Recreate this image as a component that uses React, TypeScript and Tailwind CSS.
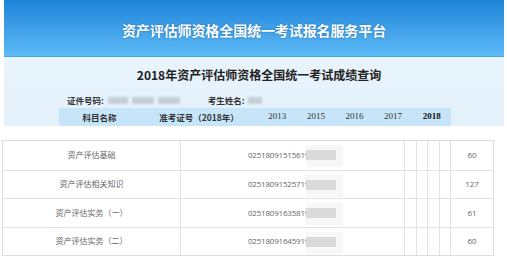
import React from "react";

const cjk = "font-['Noto_Sans_CJK_SC','Noto_Sans',sans-serif]";

const rows = [
  { name: "资产评估基础", no: "025180915156", score: "60" },
  { name: "资产评估相关知识", no: "025180915257", score: "127" },
  { name: "资产评估实务（一）", no: "025180916358", score: "61" },
  { name: "资产评估实务（二）", no: "025180916459", score: "60" }
];

const years = ["2013", "2015", "2016", "2017", "2018"];

function Blurred({ w }: { w: string }) {
  return <span className={`inline-block h-[7px] ${w} bg-[#c4cfd7] blur-[1px]`} />;
}

export default function App() {
  return (
    <div className={`h-[278px] w-[507px] overflow-hidden bg-white ${cjk}`}>
      <div className="mx-[4px] w-[500px]">
        <div className="flex h-[57px] items-center justify-center border-b border-[#49a6e6] bg-gradient-to-b from-[#1c84d9] to-[#5dbbf7]">
          <span className="mt-[4px] text-[14px] font-bold tracking-[-0.1px] text-white [text-shadow:0_0_2px_rgba(0,60,120,0.5)]">
            资产评估师资格全国统一考试报名服务平台
          </span>
        </div>

        <div className="flex h-[69px] flex-col bg-gradient-to-b from-[#e9f4fc] to-[#e3f1fb]">
          <div className="flex h-[35px] items-center justify-center pl-[10px] text-[12px] font-bold text-[#222]">
            2018年资产评估师资格全国统一考试成绩查询
          </div>
          <div className="flex h-[16px] items-center pl-[63px] text-[8.5px] font-bold text-[#333]">
            <span>证件号码:</span>
            <span className="ml-[4px] flex items-center gap-[4px]">
              <Blurred w="w-[20px]" />
              <Blurred w="w-[22px]" />
              <Blurred w="w-[22px]" />
            </span>
            <span className="ml-[28px]">考生姓名:</span>
            <span className="ml-[3px]">
              <Blurred w="w-[14px]" />
            </span>
          </div>
          <div className="ml-[55px] flex h-[18px] w-[392px] items-center bg-[#c6e5f8] text-[8.5px] font-bold text-[#333]">
            <div className="w-[81px] text-center">科目名称</div>
            <div className="w-[118px] text-center">准考证号（2018年）</div>
            {years.map((y) => (
              <div
                key={y}
                className={`w-[38.6px] text-center font-['Liberation_Serif',serif] text-[9px] ${y === "2018" ? "font-bold text-[#111]" : "font-normal"}`}
              >
                {y}
              </div>
            ))}
          </div>
        </div>
      </div>

      <div className="ml-[2px] mt-[14px] w-[492px] border border-[#dcdcdc] text-[8px] text-[#666]">
        {rows.map((r, i) => (
          <div
            key={r.name}
            className={`grid h-[28.5px] grid-cols-[178px_224px_12px_11px_12px_11px_1fr] ${i > 0 ? "border-t border-[#e2e2e2]" : ""}`}
          >
            <div className="flex items-center justify-center border-r border-[#e2e2e2]">{r.name}</div>
            <div className="relative flex items-center border-r border-[#e2e2e2] pl-[67px]">
              <span className="font-['Open_Sans','Noto_Sans',sans-serif] tracking-[-0.2px]">
                {r.no}19
              </span>
              <span className="absolute left-[125px] top-[4px] h-[22px] w-[37px] bg-[#f7f7f7]" />
              <span className="absolute left-[125px] top-[9px] h-[10px] w-[30px] bg-[#dadada]" />
            </div>
            <div className="border-r border-[#e2e2e2]" />
            <div className="border-r border-[#e2e2e2]" />
            <div className="border-r border-[#e2e2e2]" />
            <div className="border-r border-[#e2e2e2]" />
            <div className="flex items-center justify-center font-['Open_Sans','Noto_Sans',sans-serif]">{r.score}</div>
          </div>
        ))}
      </div>
    </div>
  );
}
